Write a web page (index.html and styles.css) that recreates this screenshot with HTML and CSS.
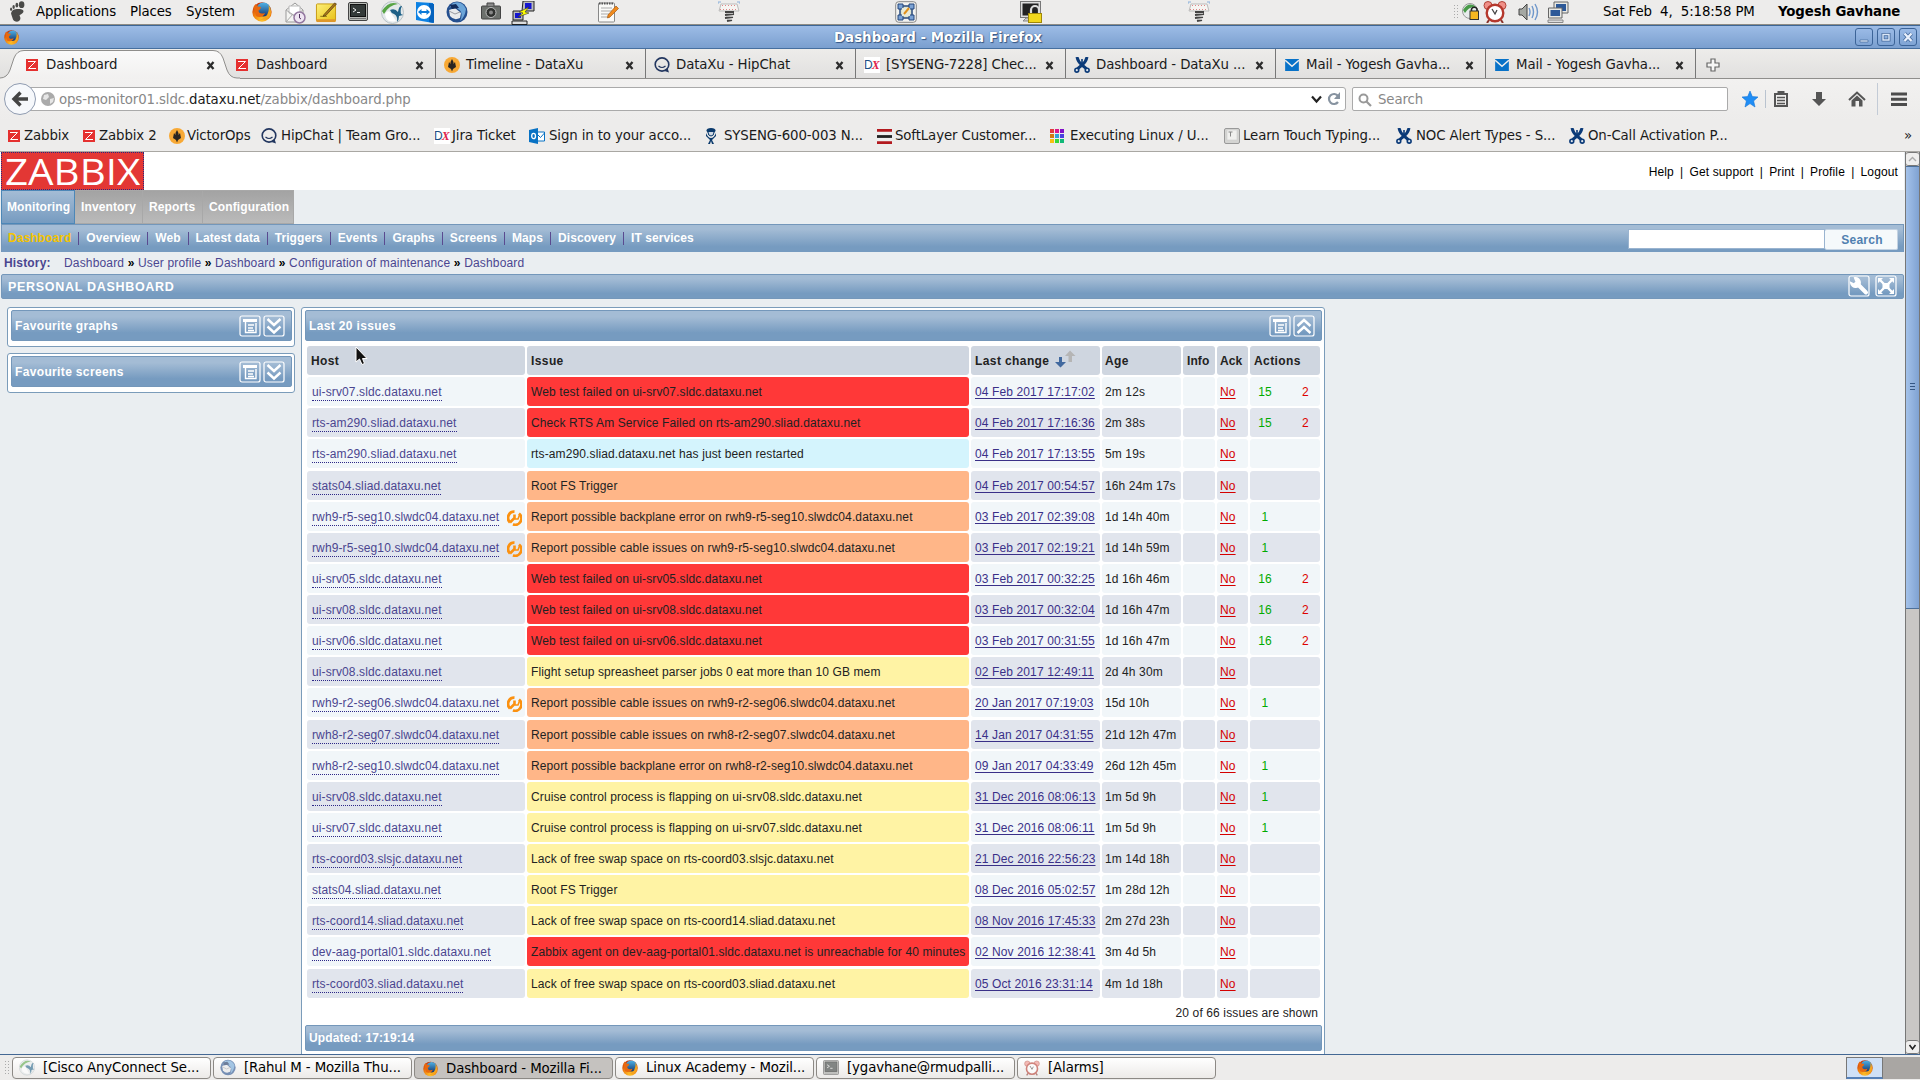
FILE: index.html
```html
<!DOCTYPE html>
<html lang="en">
<head>
<meta charset="utf-8">
<title>Dashboard - Mozilla Firefox</title>
<link rel="stylesheet" href="styles.css">
</head>
<body>
<svg class="defs" width="0" height="0">
<defs>
<radialGradient id="gFire" cx=".5" cy=".9" r=".9"><stop offset="0" stop-color="#ffc62b"/><stop offset=".5" stop-color="#f08010"/><stop offset="1" stop-color="#c22c0a"/></radialGradient>
<linearGradient id="gBlue" x1="0" y1="0" x2="0" y2="1"><stop offset="0" stop-color="#4fb4e8"/><stop offset="1" stop-color="#15366f"/></linearGradient>
<linearGradient id="gYel" x1="0" y1="0" x2="1" y2="1"><stop offset="0" stop-color="#fdf07a"/><stop offset="1" stop-color="#e8c014"/></linearGradient>
<symbol id="firefox" viewBox="0 0 20 20"><circle cx="10" cy="10" r="9.7" fill="url(#gFire)"/><circle cx="11.500" cy="7.500" r="7" fill="url(#gBlue)"/><path d="M1.500 5C2.500 3 3 3 3.500 2L5.500 4.500 9 5C8.500 7 8 7.500 6.500 8.500C6.500 11 9 12.500 13 11C12 15 7 16 4 14Z" fill="#e8680f"/><path d="M16.500 3Q20.500 8 18 14Q14 19 8 17.500Q14 16 15.500 12Q17.500 8 16.500 3Z" fill="#f5a51e"/></symbol>
<symbol id="mailclock" viewBox="0 0 22 22"><path d="M2 8 11 1 19 8V20H2Z" fill="#f4f4f2" stroke="#999" /><path d="M5 4H16V11L11 14 5 11Z" fill="#fff" stroke="#bbb"/><path d="M2 20 9 12M2 8 11 14 19 8" fill="none" stroke="#aaa"/><circle cx="15.500" cy="15.500" r="5.500" fill="#efe6f2" stroke="#9478a0" stroke-width="1.500"/><path d="M15.500 12V16L17 17" fill="none" stroke="#503060"/></symbol>
<symbol id="note" viewBox="0 0 22 22"><rect x="1" y="2" width="20" height="18" rx="1" fill="url(#gYel)" stroke="#c79a10"/><path d="M1 18H21V21H1Z" fill="#e0982a"/><path d="M5 15H12" stroke="#8a7010"/><path d="M9 13 20 1 22 2 11 14 8 15Z" fill="#a8741a" stroke="#4a3410" stroke-width=".7"/></symbol>
<symbol id="term" viewBox="0 0 20 19"><rect x=".5" y=".5" width="19" height="18" rx="1.500" fill="#b9bbb6" stroke="#444"/><rect x="2.500" y="2.500" width="15" height="12" fill="#343a38" stroke="#111"/><path d="M5 6 8 8 5 10M9 10.500H12" fill="none" stroke="#eee"/><path d="M2 16.500H18" stroke="#777"/></symbol>
<symbol id="cisco" viewBox="0 0 23 23"><circle cx="11.500" cy="11.500" r="11" fill="#e3e8ea" stroke="#b8c2c6"/><path d="M1 10Q8-1 17 3Q8 4 3 13Z" fill="#58a444"/><path d="M9 9Q14 7 17 11Q18 4 21 5Q19 8 20 13L22 14 18 15Q18 19 16 21Q17 15 13 13Q10 12 9 9Z" fill="#1f6187"/><path d="M4 13Q7 8 10 12L15 20Q8 22 5 17Z" fill="#fff"/></symbol>
<symbol id="tv" viewBox="0 0 20 22"><path d="M1 1 18 2V22L1 19Z" fill="#0d82e4"/><path d="M14 2 19 3V22L14 21Z" fill="#0563be"/><circle cx="9" cy="11" r="7" fill="#fff"/><path d="M3 11 6.500 8V10H11.500V8L15 11 11.500 14V12H6.500V14Z" fill="#0d7ad8"/></symbol>
<symbol id="tbird" viewBox="0 0 22 22"><circle cx="11" cy="11" r="10.500" fill="#254f8e"/><path d="M7 2Q16-1 20 8Q19 16 14 20Q18 11 12 8Q8 3 3 7Z" fill="#6ca5d8"/><path d="M3 9 9 7 15 12 14 17Q8 20 4 15Z" fill="#e9eaec"/><path d="M3 10 9 13 14 11" fill="none" stroke="#9a9ba0"/><path d="M4 4 10 3 13 7 6 8Z" fill="#122c5c"/></symbol>
<symbol id="camera" viewBox="0 0 20 18"><rect x=".5" y="4" width="19" height="13" rx="1" fill="#6c706c" stroke="#444"/><path d="M6 4V1H13V4" fill="#888" stroke="#444"/><circle cx="10" cy="10.500" r="5" fill="#303230" stroke="#bbb"/><circle cx="10" cy="10.500" r="2" fill="#888"/></symbol>
<symbol id="putty" viewBox="0 0 24 24"><path d="M12 0H23V10H11Z" fill="#bbb" stroke="#222"/><path d="M14 2H20.500V8H14Z" fill="#1515d0"/><path d="M2 10H12V19H2Z" fill="#bbb" stroke="#222"/><path d="M4 12H10V17H4Z" fill="#1515d0"/><path d="M1 20H16V23.500H1Z" fill="#ddd" stroke="#222"/><path d="M18 6 8 11 12 12 7 16 18 12 14 11Z" fill="#ff0" stroke="#333" stroke-width=".6"/></symbol>
<symbol id="pad" viewBox="0 0 22 22"><rect x="1.500" y="2" width="16" height="19" rx="1" fill="#fafaf8" stroke="#888"/><path d="M2 2.500H17" stroke="#555" stroke-width="2" stroke-dasharray="1.500 1"/><path d="M4 7H15M4 10H15M4 13H12M4 16H13" stroke="#aaa"/><path d="M19 5 21.500 7.500 13 16 10.500 17 11 14Z" fill="#f08a1c" stroke="#a85a10" stroke-width=".7"/></symbol>
<symbol id="screw" viewBox="0 0 22 22"><path d="M1 10 3 3H19L21 10Z" fill="#f6f4f2" stroke="#bbb"/><path d="M2 8.500H20M4 4.500H18" stroke="#d88" stroke-dasharray="1 2"/><path d="M0 3V1H3M19 1H22V3" fill="none" stroke="#8ab0dc"/><path d="M7 11H16M7 14 16 13M7 17 15 16M9 20 14 19" stroke="#444" stroke-width="2"/><path d="M8 12.500H15M8 15.500H15M9 18.500H14" stroke="#bbb"/></symbol>
<symbol id="shot" viewBox="0 0 22 22"><rect x=".7" y=".7" width="20.600" height="20.600" rx="3" fill="#f3f3f0" stroke="#888"/><rect x="5" y="5" width="12" height="12" fill="#dde3cf" stroke="#2a4a7c" stroke-width="1.500"/><path d="M3 3H8V8H3ZM14 3H19V8H14ZM3 14H8V19H3ZM14 14H19V19H14Z" fill="#7ba2d4" stroke="#24477c"/><path d="M7 7H15V15H7Z" fill="#e8ead8"/><path d="M9 13 14 7" stroke="#e0901c" stroke-width="2"/></symbol>
<symbol id="lockscr" viewBox="0 0 22 22"><rect x=".5" y=".5" width="20" height="16" fill="#ddd" stroke="#777"/><rect x="2.500" y="2.500" width="16" height="12" fill="#222"/><path d="M3 20H14V17H6Z" fill="#ccc" stroke="#888"/><path d="M11 14V9A4 4 0 0 1 19 9V14" fill="none" stroke="#ddd" stroke-width="2.200"/><rect x="8.500" y="12.500" width="13" height="9" fill="#f2d81c" stroke="#a08808"/></symbol>
<symbol id="vpnlock" viewBox="0 0 17 18"><circle cx="8" cy="9" r="7.500" fill="#e8ecec" stroke="#999"/><path d="M1 8Q7-1 14 5Q7 4 3 11Z" fill="#489a48"/><path d="M9.500 9V7A3 3 0 0 1 15 7V9" fill="none" stroke="#222" stroke-width="1.600"/><rect x="8" y="9" width="8.500" height="8.500" fill="#f8b820" stroke="#333"/></symbol>
<symbol id="alarm" viewBox="0 0 24 22"><circle cx="5" cy="4.500" r="4" fill="#f09088" stroke="#b04438"/><circle cx="19" cy="4.500" r="4" fill="#f09088" stroke="#b04438"/><path d="M6 19 4 22M18 19 20 22" stroke="#8a342c" stroke-width="2"/><circle cx="12" cy="12" r="8.300" fill="#fff" stroke="#b5382c" stroke-width="2.400"/><path d="M9 8 12 13 14 9" fill="none" stroke="#444" stroke-width="1.300"/></symbol>
<symbol id="speaker" viewBox="0 0 22 20"><path d="M1 7H4L9 2V18L4 13H1Z" fill="#a5a8a3" stroke="#444"/><path d="M11 6Q13 10 11 14M14 4Q17 10 14 16M17 2Q22 10 17 18" fill="none" stroke="#6d96ca" stroke-width="1.400"/></symbol>
<symbol id="net" viewBox="0 0 22 22"><path d="M7 1H21V12H7Z" fill="#e8e8e4" stroke="#666"/><path d="M9 3H19V10H9Z" fill="#2c5898"/><path d="M1.500 7H15V17H1.500Z" fill="#e8e8e4" stroke="#666"/><path d="M3.500 9H13V15H3.500Z" fill="#2c5898"/><path d="M1 19H16V21.500H1Z" fill="#ddd" stroke="#888"/></symbol>
<symbol id="foot" viewBox="0 0 18 24"><path d="M2 14C2 9 8 8 13 9C17 10 16 13 12 15C10 16 13 17 12 20C11 24 5 23 4 20Z" fill="#4a4a48"/><ellipse cx="13.500" cy="4" rx="3" ry="3.700" fill="#4a4a48"/><ellipse cx="8.300" cy="4.500" rx="1.500" ry="2.500" fill="#4a4a48"/><ellipse cx="4.800" cy="6.500" rx="1.300" ry="2.200" fill="#4a4a48"/><ellipse cx="2" cy="9" rx="1.100" ry="1.800" fill="#4a4a48"/></symbol>
<symbol id="zfav" viewBox="0 0 12 12"><rect width="12" height="12" fill="#e5302f"/><path d="M2 2.500H9.500L2.500 9.500H10" fill="none" stroke="#fff" stroke-width="1"/></symbol>
<symbol id="vo" viewBox="0 0 16 16"><circle cx="8" cy="8" r="8" fill="#f8a935"/><path d="M8 2 9.500 5V7L11 5 12 10 9 12 8 14.500 7 12 4 10 5 5 6.500 7V5Z" fill="#2a2522"/></symbol>
<symbol id="hip" viewBox="0 0 16 16"><ellipse cx="8" cy="7.500" rx="6.800" ry="6.600" fill="none" stroke="#22365f" stroke-width="1.600"/><path d="M4.500 9Q8 12 11.500 9" fill="none" stroke="#22365f" stroke-width="1.200"/><path d="M10.500 14 15 15.500 13.500 11Z" fill="#22365f"/></symbol>
<symbol id="ol" viewBox="0 0 16 16"><path d="M8 4H15.500V13H8Z" fill="#fff" stroke="#0872c4"/><path d="M8 6 11.500 9.500 15.500 5" fill="none" stroke="#0872c4"/><path d="M0 2 9 0V16L0 14Z" fill="#0872c4"/><ellipse cx="4.600" cy="8" rx="1.900" ry="2.700" fill="none" stroke="#fff" stroke-width="1.300"/></symbol>
<symbol id="jira" viewBox="0 0 12 16"><ellipse cx="6" cy="2.500" rx="4.500" ry="2.500" fill="#0b3a6c"/><path d="M3 4Q3 8 6 8T9 4" fill="#cfd9e4" stroke="#0b3a6c"/><path d="M1 5Q3 10 6 10T11 5L11 8 7 12 9 16H7L6 13 5 16H3L5 12 1 8Z" fill="#0b3a6c"/></symbol>
<symbol id="conf" viewBox="0 0 16 16"><path d="M3 0Q4 5 8 8Q12 11 13 13M13 0Q12 5 8 8Q4 11 3 13" fill="none" stroke="#0b3a78" stroke-width="3"/><path d="M8 2V6" stroke="#0b3a78" stroke-width="1.600"/><circle cx="2.800" cy="13.200" r="1.900" fill="#dfe6ee" stroke="#0b3a78" stroke-width="1.600"/><circle cx="13.200" cy="13.200" r="1.900" fill="#dfe6ee" stroke="#0b3a78" stroke-width="1.600"/></symbol>
<symbol id="sl" viewBox="0 0 16 16"><path d="M0 0H16V16H0Z" fill="#eee"/><path d="M0 1.500H16M0 14.500H16" stroke="#b3191e" stroke-width="3"/><path d="M0 8H16" stroke="#222" stroke-width="3"/></symbol>
<symbol id="ex" viewBox="0 0 14 14"><path d="M0 0H4V4H0Z" fill="#e23a3a"/><path d="M5 0H9V4H5Z" fill="#d8168c"/><path d="M10 0H14V4H10Z" fill="#8010c8"/><path d="M0 5H4V9H0Z" fill="#d07a10"/><path d="M5 5H9V9H5Z" fill="#30a0d8"/><path d="M10 5H14V9H10Z" fill="#4a40e0"/><path d="M0 10H4V14H0Z" fill="#f8c010"/><path d="M5 10H9V14H5Z" fill="#38d838"/><path d="M10 10H14V14H10Z" fill="#10b878"/></symbol>
<symbol id="key" viewBox="0 0 16 16"><rect x=".5" y=".5" width="15" height="15" rx="1.500" fill="#d4d4d2" stroke="#999"/><rect x="3" y="2" width="10" height="10" fill="#f0f0ee" stroke="#ccc" stroke-width=".6"/><path d="M4.500 4H8.500M6.500 4V8.500" stroke="#888"/></symbol>
<symbol id="om" viewBox="0 0 16 14"><path d="M0 0H16V14H0Z" fill="#0872c8"/><path d="M0 1.500 8 8.500 16 1.500" fill="none" stroke="#efeeed" stroke-width="1.800"/></symbol>
<symbol id="x" viewBox="0 0 9 9"><path d="M1.500 1 7.500 8M7.500 1 1.500 8" stroke="#2c2c2c" stroke-width="2.300"/></symbol>
<symbol id="menu" viewBox="0 0 22 22"><rect x="1" y="1" width="20" height="20" rx="2" fill="none" stroke="#fff" stroke-width="1.200"/><path d="M4 5.500H18" stroke="#fff" stroke-width="3"/><path d="M6.500 6V17.500H17V8M9 10H15M9 13H14M9 15.500H15" fill="none" stroke="#fff" stroke-width="1.400"/></symbol>
<symbol id="down" viewBox="0 0 22 22"><rect x="1" y="1" width="20" height="20" rx="2" fill="none" stroke="#fff" stroke-width="1.200"/><path d="M4.500 4 11 10 17.500 4M4.500 11.500 11 17.500 17.500 11.500" fill="none" stroke="#fff" stroke-width="2.400"/></symbol>
<symbol id="up" viewBox="0 0 22 22"><rect x="1" y="1" width="20" height="20" rx="2" fill="none" stroke="#fff" stroke-width="1.200"/><path d="M4.500 11 11 5 17.500 11M4.500 18 11 12 17.500 18" fill="none" stroke="#fff" stroke-width="2.400"/></symbol>
<symbol id="wrench" viewBox="0 0 22 22"><rect x="1" y="1" width="20" height="20" rx="2" fill="none" stroke="#fff" stroke-width="1.200"/><path d="M7 3A4.500 4.500 0 1 1 3 8L6 9.500 8.500 7ZM10 9 18 17" fill="#fff" stroke="#fff" stroke-width="2"/><path d="M9 8.500 18 17.500" stroke="#fff" stroke-width="4" stroke-linecap="round"/></symbol>
<symbol id="full" viewBox="0 0 22 22"><rect x="1" y="1" width="20" height="20" rx="2" fill="none" stroke="#fff" stroke-width="1.200"/><rect x="7.500" y="8" width="7" height="6" fill="#fff"/><path d="M5 5 17 17M17 5 5 17" stroke="#fff" stroke-width="2.400"/><path d="M3 3H8L3 8ZM19 3V8L14 3ZM3 19V14L8 19ZM19 19H14L19 14Z" fill="#fff"/></symbol>
<symbol id="maint" viewBox="0 0 15 16"><path d="M7.500 1.600A6 6.300 0 0 0 3 12.500" fill="none" stroke="#fb9110" stroke-width="2.800"/><path d="M12 3.500A6 6.300 0 0 1 6 14.300" fill="none" stroke="#fb9110" stroke-width="2.800"/><path d="M3 12.500 7.500 8V4.500" fill="none" stroke="#fb9110" stroke-width="2.600"/><path d="M7.500 9H11L12.500 5" fill="none" stroke="#fb9110" stroke-width="1.600"/></symbol>
</defs>
</svg>

<div class="gnome">
  <svg class="foot" width="17" height="22"><use href="#foot"/></svg>
  <span class="m1">Applications</span><span class="m2">Places</span><span class="m3">System</span>
  <svg class="g" style="left:252px" width="20" height="20"><use href="#firefox"/></svg>
  <svg class="g" style="left:284px" width="22" height="22"><use href="#mailclock"/></svg>
  <svg class="g" style="left:315px" width="22" height="21"><use href="#note"/></svg>
  <svg class="g" style="left:348px" width="20" height="19"><use href="#term"/></svg>
  <svg class="g hi" style="left:381px" width="23" height="23"><use href="#cisco"/></svg>
  <svg class="g hi" style="left:415px" width="20" height="22"><use href="#tv"/></svg>
  <svg class="g hi" style="left:446px" width="22" height="22"><use href="#tbird"/></svg>
  <svg class="g" style="left:481px" width="20" height="18"><use href="#camera"/></svg>
  <svg class="g hi" style="left:511px" width="24" height="24"><use href="#putty"/></svg>
  <svg class="g hi" style="left:597px" width="22" height="22"><use href="#pad"/></svg>
  <svg class="g hi" style="left:718px" width="22" height="22"><use href="#screw"/></svg>
  <svg class="g hi" style="left:895px" width="22" height="22"><use href="#shot"/></svg>
  <svg class="g hi" style="left:1020px" width="22" height="22"><use href="#lockscr"/></svg>
  <svg class="g hi" style="left:1188px" width="22" height="22"><use href="#screw"/></svg>
  <i class="grip" style="left:1453px"></i>
  <svg class="g" style="left:1462px" width="17" height="18"><use href="#vpnlock"/></svg>
  <svg class="g hi" style="left:1483px" width="24" height="22"><use href="#alarm"/></svg>
  <svg class="g" style="left:1518px" width="22" height="20"><use href="#speaker"/></svg>
  <svg class="g hi" style="left:1547px" width="22" height="22"><use href="#net"/></svg>
  <span class="date">Sat Feb&nbsp; 4,&nbsp; 5:18:58 PM</span><b class="user">Yogesh Gavhane</b>
</div>

<div class="title"><svg class="tico" width="15" height="17"><use href="#firefox"/></svg><b>Dashboard - Mozilla Firefox</b>
  <div class="wins"><i><svg width="16" height="16"><path d="M4 11H12V13H4Z" fill="#dce8f8" stroke="#466a9c" stroke-width=".7"/></svg></i><i><svg width="16" height="16"><path d="M5 5.500H11V11H5Z" fill="none" stroke="#466a9c" stroke-width="3"/><path d="M5 5.500H11V11H5Z" fill="none" stroke="#dce8f8" stroke-width="1.400"/></svg></i><i><svg width="16" height="16"><path d="M4.500 4.500 11.500 12M11.500 4.500 4.500 12" stroke="#466a9c" stroke-width="4"/><path d="M4.500 4.500 11.500 12M11.500 4.500 4.500 12" stroke="#e8f0fc" stroke-width="2.400"/></svg></i></div>
</div>

<div class="tabs">
  <svg class="curve" width="240" height="30"><defs><linearGradient id="gt" x1="0" y1="0" x2="0" y2="1"><stop offset="0" stop-color="#fafafa"/><stop offset="1" stop-color="#f1f0ef"/></linearGradient></defs><path d="M0 30.500V29Q7 29 10 21L14 9Q17 1.500 24 1.500H213Q220 1.500 223 9L227 21Q230 29 237 29H240V30.500Z" fill="url(#gt)"/><path d="M0 29Q7 29 10 21L14 9Q17 1.500 24 1.500H213Q220 1.500 223 9L227 21Q230 29 237 29H240" fill="none" stroke="#8f8e8c"/></svg>
  <div class="tab t1"><svg width="12" height="12"><use href="#zfav"/></svg><span>Dashboard</span><svg class="cl" width="9" height="9"><use href="#x"/></svg></div>
  <div class="tab z"><svg width="12" height="12"><use href="#zfav"/></svg><span>Dashboard</span><svg class="cl" width="9" height="9"><use href="#x"/></svg></div>
  <div class="tab s"><svg width="16" height="16"><use href="#vo"/></svg><span>Timeline - DataXu</span><svg class="cl" width="9" height="9"><use href="#x"/></svg></div>
  <div class="tab s"><svg width="16" height="16"><use href="#hip"/></svg><span>DataXu - HipChat</span><svg class="cl" width="9" height="9"><use href="#x"/></svg></div>
  <div class="tab s"><em class="dx">D<b>X</b></em><span>[SYSENG-7228] Chec...</span><svg class="cl" width="9" height="9"><use href="#x"/></svg></div>
  <div class="tab s"><svg width="16" height="16"><use href="#conf"/></svg><span>Dashboard - DataXu ...</span><svg class="cl" width="9" height="9"><use href="#x"/></svg></div>
  <div class="tab s"><svg width="16" height="12"><use href="#om"/></svg><span>Mail - Yogesh Gavha...</span><svg class="cl" width="9" height="9"><use href="#x"/></svg></div>
  <div class="tab s"><svg width="16" height="12"><use href="#om"/></svg><span>Mail - Yogesh Gavha...</span><svg class="cl" width="9" height="9"><use href="#x"/></svg></div>
  <div class="tab s last"><svg width="14" height="14"><path d="M5 1H9V5H13V9H9V13H5V9H1V5H5Z" fill="#f6f6f5" stroke="#666" stroke-width="1.200"/></svg></div>
</div>

<div class="nav">
  <div class="url"><svg class="globe" width="14" height="14"><circle cx="7" cy="7" r="7" fill="#aaa"/><path d="M3 3 7 2 8 5 5 8 2 7ZM9 7 13 6 12 10 9 12Z" fill="#e6e6e6"/></svg><span>ops-monitor01.sldc.<b>dataxu.net</b>/zabbix/dashboard.php</span>
    <svg class="dd" width="34" height="16"><path d="M3 5.500 7.500 10.500 12 5.500" fill="none" stroke="#222" stroke-width="2.200"/><path d="M29 5A5 5 0 1 0 29 11" fill="none" stroke="#8793a0" stroke-width="2.200"/><path d="M31 1V8H25Z" fill="#8793a0"/></svg></div>
  <svg class="back" width="34" height="34"><circle cx="17" cy="17" r="15.500" fill="#f6f8fb" stroke="#8f9bb0"/><path d="M25 17H12M17.500 10.500 11 17 17.500 23.500" fill="none" stroke="#444" stroke-width="3.400"/></svg>
  <div class="search"><svg width="14" height="14"><circle cx="5.500" cy="5.500" r="4" fill="none" stroke="#999" stroke-width="2"/><path d="M8.500 8.500 13 13" stroke="#999" stroke-width="2.200"/></svg><span>Search</span></div>
  <svg class="tools" width="180" height="34"><path d="M20 9 22.300 14.600 28 15 23.600 18.900 25 25 20 21.600 15 25 16.400 18.900 12 15 17.700 14.600Z" fill="#1f8df5" stroke="#1273d6" stroke-width=".6"/><path d="M35.500 8V26" stroke="#b9c3cf"/><path d="M45 12H57V24H45Z" fill="#f0efee" stroke="#555" stroke-width="2"/><path d="M48.500 12V10H53.500V12" fill="none" stroke="#555" stroke-width="2"/><path d="M47 15.500H55M47 18.500H55M47 21.500H55" stroke="#555" stroke-width="1.300"/><path d="M86 10H92V17H96L89 24 82 17H86Z" fill="#555"/><path d="M119 18 127 10.500 135 18" fill="none" stroke="#555" stroke-width="2"/><path d="M121.500 18.500 127 13.500 132.500 18.500V24.500H129V19H125.500V24.500H121.500Z" fill="#555"/><path d="M147.500 1V33" stroke="#c3cbd6"/><path d="M161 12H177M161 17.200H177M161 22.400H177" stroke="#4c4c4c" stroke-width="3"/></svg>
</div>

<div class="marks">
  <div style="width:75px"><svg width="12" height="12"><use href="#zfav"/></svg><span style="margin-left:4px">Zabbix</span></div>
  <div style="width:86px"><svg width="12" height="12"><use href="#zfav"/></svg><span style="margin-left:4px">Zabbix 2</span></div>
  <div style="width:92px"><svg width="16" height="16"><use href="#vo"/></svg><span>VictorOps</span></div>
  <div style="width:173px"><svg width="16" height="16"><use href="#hip"/></svg><span style="margin-left:4px">HipChat | Team Gro...</span></div>
  <div style="width:95px"><em class="dx">D<b>X</b></em><span>Jira Ticket</span></div>
  <div style="width:176px"><svg width="16" height="16"><use href="#ol"/></svg><span style="margin-left:4px">Sign in to your acco...</span></div>
  <div style="width:172px"><svg width="12" height="16"><use href="#jira"/></svg><span style="margin-left:7px">SYSENG-600-003 N...</span></div>
  <div style="width:173px"><svg width="15" height="15"><use href="#sl"/></svg><span style="margin-left:3px">SoftLayer Customer...</span></div>
  <div style="width:174px"><svg width="14" height="14"><use href="#ex"/></svg><span style="margin-left:6px">Executing Linux / U...</span></div>
  <div style="width:172px"><svg width="16" height="16"><use href="#key"/></svg><span style="margin-left:3px">Learn Touch Typing...</span></div>
  <div style="width:173px"><svg width="16" height="16"><use href="#conf"/></svg><span style="margin-left:4px">NOC Alert Types - S...</span></div>
  <div style="width:335px"><svg width="16" height="16"><use href="#conf"/></svg><span style="margin-left:3px">On-Call Activation P...</span></div>
  <div><span style="margin-left:0">»</span></div>
</div>

<div class="view">
 <div class="page">
  <div class="head"><div class="logo"><span>ZABBIX</span></div><div class="links"><span>Help</span><i>|</i><span>Get support</span><i>|</i><span>Print</span><i>|</i><span>Profile</span><i>|</i><span>Logout</span></div></div>
  <div class="ztabs"><b class="on">Monitoring</b><b style="width:68px">Inventory</b><b style="width:60px">Reports</b><b style="width:91px">Configuration</b></div>
  <div class="sub"><div class="subl"><b class="cur">Dashboard</b><i></i><b>Overview</b><i></i><b>Web</b><i></i><b>Latest data</b><i></i><b>Triggers</b><i></i><b>Events</b><i></i><b>Graphs</b><i></i><b>Screens</b><i></i><b>Maps</b><i></i><b>Discovery</b><i></i><b>IT services</b></div><div class="inp"></div><div class="btn">Search</div></div>
  <div class="hist"><b class="hl">History:</b><span>Dashboard <b>»</b> User profile <b>»</b> Dashboard <b>»</b> Configuration of maintenance <b>»</b> Dashboard</span></div>
  <div class="pd"><span>PERSONAL DASHBOARD</span><svg width="22" height="22"><use href="#wrench"/></svg><svg width="22" height="22"><use href="#full"/></svg></div>
  <div class="cols">
   <div class="left">
    <div class="box"><div class="bar"><b>Favourite graphs</b><svg width="22" height="22"><use href="#menu"/></svg><svg width="22" height="22"><use href="#down"/></svg></div></div>
    <div class="box"><div class="bar"><b>Favourite screens</b><svg width="22" height="22"><use href="#menu"/></svg><svg width="22" height="22"><use href="#down"/></svg></div></div>
   </div>
   <div class="main">
    <div class="bar"><b>Last 20 issues</b><svg width="22" height="22"><use href="#menu"/></svg><svg width="22" height="22"><use href="#up"/></svg></div>
    <div class="tbl">
     <div class="r h"><b>Host</b><b>Issue</b><b>Last change <svg class="sort" width="21" height="18"><path d="M4 7H7V12H11L5.500 17.500 0 12H4Z" fill="#41699f"/><path d="M13.500 12V6H10L15 .5 20.500 6H17V12Z" fill="#b5b5b5"/></svg></b><b>Age</b><b>Info</b><b>Ack</b><b>Actions</b></div>
     <div class="r"><p><a>ui-srv07.sldc.dataxu.net</a></p><p class="red">Web test failed on ui-srv07.sldc.dataxu.net</p><p><u>04 Feb 2017 17:17:02</u></p><p>2m 12s</p><p></p><p><u>No</u></p><p><i>15</i><s>2</s></p></div>
     <div class="r"><p><a>rts-am290.sliad.dataxu.net</a></p><p class="red">Check RTS Am Service Failed on rts-am290.sliad.dataxu.net</p><p><u>04 Feb 2017 17:16:36</u></p><p>2m 38s</p><p></p><p><u>No</u></p><p><i>15</i><s>2</s></p></div>
     <div class="r"><p><a>rts-am290.sliad.dataxu.net</a></p><p class="cyan">rts-am290.sliad.dataxu.net has just been restarted</p><p><u>04 Feb 2017 17:13:55</u></p><p>5m 19s</p><p></p><p><u>No</u></p><p></p></div>
     <div class="r"><p><a>stats04.sliad.dataxu.net</a></p><p class="org">Root FS Trigger</p><p><u>04 Feb 2017 00:54:57</u></p><p>16h 24m 17s</p><p></p><p><u>No</u></p><p></p></div>
     <div class="r"><p><a>rwh9-r5-seg10.slwdc04.dataxu.net</a><svg class="mt" width="15" height="16"><use href="#maint"/></svg></p><p class="org">Report possible backplane error on rwh9-r5-seg10.slwdc04.dataxu.net</p><p><u>03 Feb 2017 02:39:08</u></p><p>1d 14h 40m</p><p></p><p><u>No</u></p><p><i>1</i></p></div>
     <div class="r"><p><a>rwh9-r5-seg10.slwdc04.dataxu.net</a><svg class="mt" width="15" height="16"><use href="#maint"/></svg></p><p class="org">Report possible cable issues on rwh9-r5-seg10.slwdc04.dataxu.net</p><p><u>03 Feb 2017 02:19:21</u></p><p>1d 14h 59m</p><p></p><p><u>No</u></p><p><i>1</i></p></div>
     <div class="r"><p><a>ui-srv05.sldc.dataxu.net</a></p><p class="red">Web test failed on ui-srv05.sldc.dataxu.net</p><p><u>03 Feb 2017 00:32:25</u></p><p>1d 16h 46m</p><p></p><p><u>No</u></p><p><i>16</i><s>2</s></p></div>
     <div class="r"><p><a>ui-srv08.sldc.dataxu.net</a></p><p class="red">Web test failed on ui-srv08.sldc.dataxu.net</p><p><u>03 Feb 2017 00:32:04</u></p><p>1d 16h 47m</p><p></p><p><u>No</u></p><p><i>16</i><s>2</s></p></div>
     <div class="r"><p><a>ui-srv06.sldc.dataxu.net</a></p><p class="red">Web test failed on ui-srv06.sldc.dataxu.net</p><p><u>03 Feb 2017 00:31:55</u></p><p>1d 16h 47m</p><p></p><p><u>No</u></p><p><i>16</i><s>2</s></p></div>
     <div class="r"><p><a>ui-srv08.sldc.dataxu.net</a></p><p class="yel">Flight setup spreasheet parser jobs 0 eat more than 10 GB mem</p><p><u>02 Feb 2017 12:49:11</u></p><p>2d 4h 30m</p><p></p><p><u>No</u></p><p></p></div>
     <div class="r"><p><a>rwh9-r2-seg06.slwdc04.dataxu.net</a><svg class="mt" width="15" height="16"><use href="#maint"/></svg></p><p class="org">Report possible cable issues on rwh9-r2-seg06.slwdc04.dataxu.net</p><p><u>20 Jan 2017 07:19:03</u></p><p>15d 10h</p><p></p><p><u>No</u></p><p><i>1</i></p></div>
     <div class="r"><p><a>rwh8-r2-seg07.slwdc04.dataxu.net</a></p><p class="org">Report possible cable issues on rwh8-r2-seg07.slwdc04.dataxu.net</p><p><u>14 Jan 2017 04:31:55</u></p><p>21d 12h 47m</p><p></p><p><u>No</u></p><p></p></div>
     <div class="r"><p><a>rwh8-r2-seg10.slwdc04.dataxu.net</a></p><p class="org">Report possible backplane error on rwh8-r2-seg10.slwdc04.dataxu.net</p><p><u>09 Jan 2017 04:33:49</u></p><p>26d 12h 45m</p><p></p><p><u>No</u></p><p><i>1</i></p></div>
     <div class="r"><p><a>ui-srv08.sldc.dataxu.net</a></p><p class="yel">Cruise control process is flapping on ui-srv08.sldc.dataxu.net</p><p><u>31 Dec 2016 08:06:13</u></p><p>1m 5d 9h</p><p></p><p><u>No</u></p><p><i>1</i></p></div>
     <div class="r"><p><a>ui-srv07.sldc.dataxu.net</a></p><p class="yel">Cruise control process is flapping on ui-srv07.sldc.dataxu.net</p><p><u>31 Dec 2016 08:06:11</u></p><p>1m 5d 9h</p><p></p><p><u>No</u></p><p><i>1</i></p></div>
     <div class="r"><p><a>rts-coord03.slsjc.dataxu.net</a></p><p class="yel">Lack of free swap space on rts-coord03.slsjc.dataxu.net</p><p><u>21 Dec 2016 22:56:23</u></p><p>1m 14d 18h</p><p></p><p><u>No</u></p><p></p></div>
     <div class="r"><p><a>stats04.sliad.dataxu.net</a></p><p class="yel">Root FS Trigger</p><p><u>08 Dec 2016 05:02:57</u></p><p>1m 28d 12h</p><p></p><p><u>No</u></p><p></p></div>
     <div class="r"><p><a>rts-coord14.sliad.dataxu.net</a></p><p class="yel">Lack of free swap space on rts-coord14.sliad.dataxu.net</p><p><u>08 Nov 2016 17:45:33</u></p><p>2m 27d 23h</p><p></p><p><u>No</u></p><p></p></div>
     <div class="r"><p><a>dev-aag-portal01.sldc.dataxu.net</a></p><p class="red">Zabbix agent on dev-aag-portal01.sldc.dataxu.net is unreachable for 40 minutes</p><p><u>02 Nov 2016 12:38:41</u></p><p>3m 4d 5h</p><p></p><p><u>No</u></p><p></p></div>
     <div class="r"><p><a>rts-coord03.sliad.dataxu.net</a></p><p class="yel">Lack of free swap space on rts-coord03.sliad.dataxu.net</p><p><u>05 Oct 2016 23:31:14</u></p><p>4m 1d 18h</p><p></p><p><u>No</u></p><p></p></div>
    </div>
    <div class="shown">20 of 66 issues are shown</div>
    <div class="bar upd"><b>Updated: 17:19:14</b></div>
   </div>
  </div>
 </div>
 <div class="sbar"><div class="sb"><svg width="13" height="12"><path d="M3 8 6.500 4.500 10 8" fill="none" stroke="#aaa" stroke-width="1.400"/></svg></div><div class="thumb"><i></i><i></i><i></i></div><div class="trough"></div><div class="sb"><svg width="13" height="12"><path d="M3.500 4 6.500 8 9.500 4" fill="none" stroke="#222" stroke-width="1.600"/></svg></div></div>
</div>

<div class="tasks">
  <i class="grip"></i>
  <div class="task"><svg class="dim" width="16" height="17"><use href="#cisco"/></svg><span>[Cisco AnyConnect Se...</span></div>
  <div class="task"><svg class="dim" width="16" height="17"><use href="#tbird"/></svg><span>[Rahul M - Mozilla Thu...</span></div>
  <div class="task act"><svg width="15" height="16"><use href="#firefox"/></svg><span>Dashboard - Mozilla Fi...</span></div>
  <div class="task"><svg width="16" height="16"><use href="#firefox"/></svg><span>Linux Academy - Mozil...</span></div>
  <div class="task"><svg class="dim" width="16" height="15"><use href="#term"/></svg><span>[ygavhane@rmudpalli...</span></div>
  <div class="task"><svg class="dim" width="16" height="16"><use href="#alarm"/></svg><span>[Alarms]</span></div>
  <div class="pager"><svg width="16" height="16"><use href="#firefox"/></svg></div><div class="pg2"></div>
</div>
<svg class="cursor" width="14" height="20"><path d="M1 1V16L4.500 13 7 18.500 9.500 17.500 7.500 12.500H12Z" fill="#111" stroke="#fff"/></svg>
</body>
</html>
```
FILE: styles.css
```css
* { box-sizing: border-box; }
body { margin: 0; width: 1920px; height: 1080px; overflow: hidden; background: #edeceb; font: 13.33px/16px "DejaVu Sans", sans-serif; letter-spacing: -.12px; color: #1a1a1a; display: flex; flex-direction: column; }
.defs { position: absolute; }
svg { flex: none; display: block; }
span, b { white-space: nowrap; }
p { margin: 0; }
i, em { font-style: normal; }
.gnome { height: 25px; position: relative; border-bottom: 1px solid #8e8c85; background: #edeceb; flex: none; }
.gnome span, .gnome b, .foot, .g { position: absolute; top: 4px; color: #000; }
.gnome .foot { left: 9px; top: 1px; }
.gnome .g { top: 2px; }
.gnome .hi { top: 1px; }
.gnome .m1 { left: 36px; }
.gnome .m2 { left: 130px; }
.gnome .m3 { left: 186px; }
.gnome .date { left: 1603px; }
.gnome .user { left: 1778px; }
.grip { position: absolute; top: 4px; width: 5px; height: 16px; background: radial-gradient(circle, #aaa 0.8px, transparent 1px) 0 0 / 3px 3px; }
.title { height: 24px; flex: none; background: linear-gradient(#9dbce6, #7a9fcf); border-top: 1px solid #3d6695; border-bottom: 1px solid #466f9f; position: relative; display: flex; justify-content: center; align-items: center; color: #fff; text-shadow: 0 0 1px #345684, 1px 1px 1px #345684; padding: 2px 44px 0 0; letter-spacing: .06px; }
.tico { position: absolute; left: 4px; top: 3px; }
.wins { position: absolute; right: 3px; top: 2px; display: flex; gap: 4px; }
.wins i { width: 18px; height: 18px; border: 1px solid #3c6498; border-radius: 3px; background: linear-gradient(#9abae6, #7fa4d4); }
.tabs { height: 30px; flex: none; display: flex; position: relative; background: linear-gradient(#edecea, #e1e0df); border-bottom: 1px solid #8f8e8c; }
.curve { position: absolute; left: 0; top: 0; }
.tab { width: 210px; display: flex; align-items: center; position: relative; padding: 2px 0 0 8px; }
.tab.s { border-left: 1px solid #777; }
.tab > svg:first-child { margin-right: 6px; }
.tab .cl { position: absolute; right: 11px; top: 12px; }
.t1 { width: 226px; padding-left: 26px; }
.t1 > svg:first-child, .z > svg:first-child { margin-right: 8px; }
.tab.t1 .cl { right: 11px; }
.z { width: 209px; padding-left: 10px; }
.tab.last { width: 225px; padding-left: 10px; }
.dx { width: 16px; height: 16px; background: #fff; font: 12px/16px "Liberation Sans", sans-serif; color: #1c4f85; letter-spacing: -1px; flex: none; }
.dx b { font: italic bold 12px/16px "Liberation Serif", serif; color: #e0244c; }
.tab .dx { margin-right: 6px; }
.nav { height: 41px; flex: none; position: relative; display: flex; padding: 8px 0 0 20px; background: linear-gradient(#f2f1f0, #edeceb); }
.url { width: 1326px; height: 24px; border: 1px solid #aaa; background: #fff; border-radius: 3px; display: flex; align-items: center; padding-left: 20px; color: #888; }
.url span { margin: 1px 0 0 4px; }
.url b { font-weight: normal; color: #1a1a1a; }
.dd { margin-left: auto; margin-right: 2px; }
.back { position: absolute; left: 3px; top: 3px; }
.search { margin-left: 6px; width: 376px; height: 24px; border: 1px solid #aaa; background: #fff; border-radius: 2px; display: flex; align-items: center; padding: 1px 0 0 5px; color: #888; gap: 6px; }
.tools { margin-top: -5px; margin-left: 2px; }
.marks { height: 32px; flex: none; display: flex; padding-left: 8px; border-bottom: 1px solid #a9a7a3; }
.marks > div { display: flex; align-items: center; flex: none; height: 31px; padding-top: 1px; }
.marks span { margin-left: 2px; }
.view { height: 902px; flex: none; display: flex; }
.page { width: 1905px; height: 902px; overflow: hidden; background: #eaeef1; padding: 0 1px; font: 12px/14px "Liberation Sans", Arial, sans-serif; letter-spacing: .12px; color: #222; }
.head { height: 38px; background: #fff; margin: 0 0 0 -1px; display: flex; justify-content: space-between; padding-left: 1px; }
.logo { width: 143px; height: 38px; background: #e33734; border: 1px dotted #2a2a80; color: #fff; font: 37px/36px "Open Sans", sans-serif; letter-spacing: 0; padding-left: 3px; }
.logo span { display: inline-block; transform-origin: 0 50%; transform: scaleX(1.09); }
.links { display: flex; padding: 13px 6px 0 0; color: #000; height: 38px; }
.links i { margin: 0 6.2px; }
.ztabs { display: flex; height: 34px; color: #fff; }
.ztabs b { background: linear-gradient(#a3a3a3, #bababa); border: 1px solid #a8a8a8; border-width: 1px 1px 1px 0; padding: 9px 0 0 6px; letter-spacing: .12px; }
.ztabs .on { width: 74px; padding-left: 5px; background: linear-gradient(#a4bcd5, #769bc0); border: 1px solid #4d87b7; }
.sub { height: 28px; display: flex; border: 1px solid #7497ba; border-width: 1px 1px 0; background: linear-gradient(#a4bcd5 15%, #769bc0 80%); color: #fff; position: relative; }
.subl { display: flex; padding: 6px 0 0 6px; letter-spacing: .07px; }
.subl i { width: 1px; height: 13px; background: #5a4a90; margin: 1px 7px 0; }
.subl .cur { color: #f5c400; }
.inp { margin-left: auto; margin-top: 4px; width: 197px; height: 20px; background: #fff; border: 1px solid #9ab4d0; }
.btn { width: 73px; height: 21px; margin: 4px 5px 0 0; background: #f5f9fb; border: 1px solid #c3d2e2; border-left: 0; border-radius: 2px; color: #5080b0; font-weight: bold; text-align: center; line-height: 20px; letter-spacing: .25px; padding-left: 2px; }
.hist { height: 22px; padding: 4px 0 0 3px; display: flex; color: #4b4690; letter-spacing: .16px; }
.hist span b { color: #000; }
.hl { width: 60px; }
.pd { height: 25px; display: flex; align-items: center; border: 1px solid #7497ba; border-radius: 2px; background: linear-gradient(#a4bcd5 15%, #769bc0 80%); color: #fff; padding: 0 6px; font-size: 12.5px; letter-spacing: .7px; }
.pd span { margin-right: auto; font-weight: bold; }
.pd svg { margin-left: 5px; margin-top: -2px; }
.cols { display: flex; padding: 8px 0 0 6px; }
.left { width: 288px; margin-right: 6px; }
.box { height: 40px; border: 1px solid #7b9cba; border-radius: 3px; background: #fff; padding: 2px 2px 2px 3px; margin-bottom: 6px; }
.bar { height: 31px; border: 1px solid #7497ba; border-radius: 2px; background: linear-gradient(#a4bcd5 20%, #769bc0 75%); color: #fff; display: flex; align-items: center; padding: 0 6px 0 3px; gap: 2px; }
.bar b { margin-right: auto; letter-spacing: .35px; }
.main { width: 1024px; height: 760px; border: 1px solid #7b9cba; border-radius: 3px; background: #fff; padding: 2px; }
.main .bar { margin-left: 1px; }
.tbl { padding: 5px 0 1.400px 3px; display: flex; flex-direction: column; gap: 2.140px; }
.r { height: 29px; display: grid; grid-template-columns: 218px 442px 129px 79px 32px 31px 70px; gap: 2px; }
.r > * { border-radius: 3px; background: #f1f6f9; padding: 8px 4px 0; white-space: nowrap; display: flex; position: relative; overflow: hidden; }
.r > :nth-child(4), .r > :nth-child(6) { padding-left: 3px; }
.r:nth-child(odd) > * { background: #e1e5ed; }
.r.h > * { background: #cfd6e0; overflow: visible; letter-spacing: .4px; }
.r.h > :nth-child(5), .r.h > :nth-child(6) { letter-spacing: .1px; }
.r a { height: 16px; border-bottom: 1px dotted #2d2888; color: #4b4690; margin-left: 1px; }
.r u { color: #3a3088; text-underline-offset: 1.500px; }
.r > :nth-child(6) u { color: #d40000; }
.r .red { background: #ff3838; }
.r .cyan { background: #d4f4fd; }
.r .org { background: #ffb688; }
.r .yel { background: #fff3a4; }
.r i { color: #0a0; width: 22px; text-align: center; }
.r s { color: #d00; text-decoration: none; margin-left: 26px; }
.mt { position: absolute; right: 3px; top: 8px; }
.sort { margin: -4px 0 0 6px; }
.shown { text-align: right; padding: 7px 4px 0 0; height: 26px; color: #222; }
.upd { height: 26px; }
.bar.upd b { letter-spacing: .12px; }
.sbar { width: 15px; background: #c9c7c5; border: 1px solid #777; border-width: 0 1px 0 1px; display: flex; flex-direction: column; }
.sb { height: 14px; background: #efeeed; border: 1px solid #777; border-width: 1px 0; border-radius: 3px; }
.thumb { height: 443px; background: linear-gradient(90deg, #a4c2ea, #7fa2d2); border: 1px solid #4d7099; border-width: 1px 0; display: flex; flex-direction: column; gap: 2px; padding: 216px 4px 0 4px; }
.thumb i { height: 1px; width: 5px; background: #345684; }
.trough { flex: 1; }
.tasks { height: 26px; flex: none; border-top: 1px solid #446894; background: #edeceb; display: flex; padding: 1px 0 0 12px; gap: 2px; position: relative; }
.tasks .grip { left: 4px; top: 5px; }
.task { width: 199px; height: 22px; margin-top: 1px; border: 1px solid #8c8985; border-radius: 4px; background: linear-gradient(#fff, #eceae8); display: flex; align-items: center; gap: 8px; padding: 0 0 1px 6px; color: #000; }
.task.act { background: #c5c2bf; padding: 2px 0 1px 8px; }
.dim { opacity: .6; }
.pager { margin-left: auto; width: 37px; height: 22px; margin-top: 1px; border: 1px solid #777; background: #cfe0f6; border-bottom: 2px solid #5580b8; display: flex; justify-content: center; align-items: center; }
.pg2 { width: 37px; height: 22px; margin: 1px 0 0 -2px; background: #a9a6a3; }
.cursor { position: absolute; left: 355px; top: 346px; }
```
